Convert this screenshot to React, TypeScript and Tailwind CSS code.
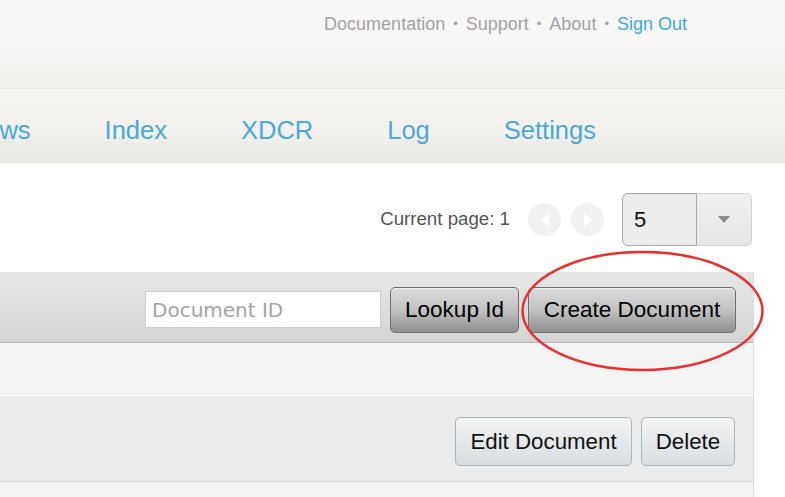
import React from "react";

const sans = { fontFamily: '"Liberation Sans", Arial, Helvetica, sans-serif' };

export default function App() {
  return (
    <div className="relative w-[785px] h-[497px] overflow-hidden bg-white" style={sans}>
      {/* Top header */}
      <div className="h-[88px] bg-gradient-to-b from-[#f9f8f6] via-[#f8f7f5] to-[#f0efec] flex justify-end pr-[98px] pt-[12px]">
        <div className="flex items-start text-[18px] leading-[24px] text-[#a2a2aa]">
          <span>Documentation</span>
          <span className="mx-[8px] text-[13px] leading-[24px]">•</span>
          <span>Support</span>
          <span className="mx-[8px] text-[13px] leading-[24px]">•</span>
          <span>About</span>
          <span className="mx-[8px] text-[13px] leading-[24px]">•</span>
          <span className="text-[#3ea7df]">Sign Out</span>
        </div>
      </div>

      {/* Nav bar */}
      <div className="h-[75px] border-t border-[#ebeae6] bg-gradient-to-b from-[#f5f4f0] via-[#f3f2ee] to-[#e9e8e3] flex items-center pt-[9px] text-[25.5px] text-[#4aa8dc]">
        <div className="flex gap-[74px] ml-[-37px]">
          <span>Views</span>
          <span>Index</span>
          <span>XDCR</span>
          <span>Log</span>
          <span>Settings</span>
        </div>
      </div>

      {/* Pagination row */}
      <div className="h-[109px] flex justify-end items-start pt-[30px] pr-[33px]">
        <div className="flex items-center h-[53px]">
          <span className="text-[18.7px] text-[#555] mr-[18px]">Current page: 1</span>
          <div className="w-[33px] h-[33px] rounded-full bg-[#f1f1f1] flex items-center justify-center">
            <svg width="12" height="14" viewBox="0 0 12 14"><polygon points="10,1 10,13 2,7" fill="#fff" /></svg>
          </div>
          <div className="w-[33px] h-[33px] rounded-full bg-[#f1f1f1] flex items-center justify-center ml-[10px] mr-[18px]">
            <svg width="12" height="14" viewBox="0 0 12 14"><polygon points="2,1 2,13 10,7" fill="#fff" /></svg>
          </div>
          <div className="flex h-[53px]">
            <div className="w-[75px] h-full bg-[#ededed] border border-[#a9a9a9] rounded-l-[6px] flex items-center pl-[11px] text-[22px] text-[#111]">5</div>
            <div className="w-[55px] h-full bg-gradient-to-b from-[#f1f1f1] to-[#e6e6e6] border border-l-0 border-[#d2d2d2] rounded-r-[6px] flex items-center justify-center">
              <svg width="12" height="7" viewBox="0 0 12 7"><polygon points="0,0 12,0 6,7" fill="#8a8a8a" /></svg>
            </div>
          </div>
        </div>
      </div>

      {/* Panel */}
      <div className="w-[754px] border-r border-[#dcdcdc]">
        <div className="h-[71px] bg-gradient-to-b from-[#e7e7e7] via-[#dedede] to-[#d4d4d4] border-b border-[#b6b6b6] flex items-center justify-end pr-[17px] gap-[9px] pt-[5px]">
          <div className="w-[236px] h-[37px] bg-white border border-[#c9cfd4] flex items-center pl-[6px] text-[20px] text-[#a3a3a3]" style={{ fontFamily: '"DejaVu Sans", sans-serif' }}>
            Document ID
          </div>
          <button className="w-[129px] h-[46px] rounded-[5px] border border-[#707070] bg-gradient-to-b from-[#dcdcdc] via-[#c2c2c2] to-[#8f8f8f] text-[22.5px] text-black shadow-[inset_0_1px_0_#eee]">
            Lookup Id
          </button>
          <button className="w-[208px] h-[46px] rounded-[5px] border border-[#707070] bg-gradient-to-b from-[#dcdcdc] via-[#c2c2c2] to-[#8f8f8f] text-[22.5px] text-black shadow-[inset_0_1px_0_#eee]">
            Create Document
          </button>
        </div>
        <div className="h-[53px] bg-[#f4f4f4] border-b border-white" />
        <div className="h-[86px] bg-[#ececec] border-b border-[#d3d7da] flex items-center justify-end pr-[18px] gap-[9px] pt-[6px]">
          <button className="w-[177px] h-[49px] rounded-[5px] border border-[#a9b5bd] bg-gradient-to-b from-[#f3f4f5] to-[#d9dde0] text-[22.3px] text-[#111]">
            Edit Document
          </button>
          <button className="w-[94px] h-[49px] rounded-[5px] border border-[#a9b5bd] bg-gradient-to-b from-[#f3f4f5] to-[#d9dde0] text-[22.3px] text-[#111]">
            Delete
          </button>
        </div>
        <div className="h-[20px] bg-[#f4f4f4]" />
      </div>

      {/* Red annotation ellipse */}
      <svg className="absolute left-0 top-0 pointer-events-none" width="785" height="497">
        <ellipse cx="642.5" cy="311" rx="120" ry="59" fill="none" stroke="#e8312c" strokeWidth="2.5" />
      </svg>
    </div>
  );
}
